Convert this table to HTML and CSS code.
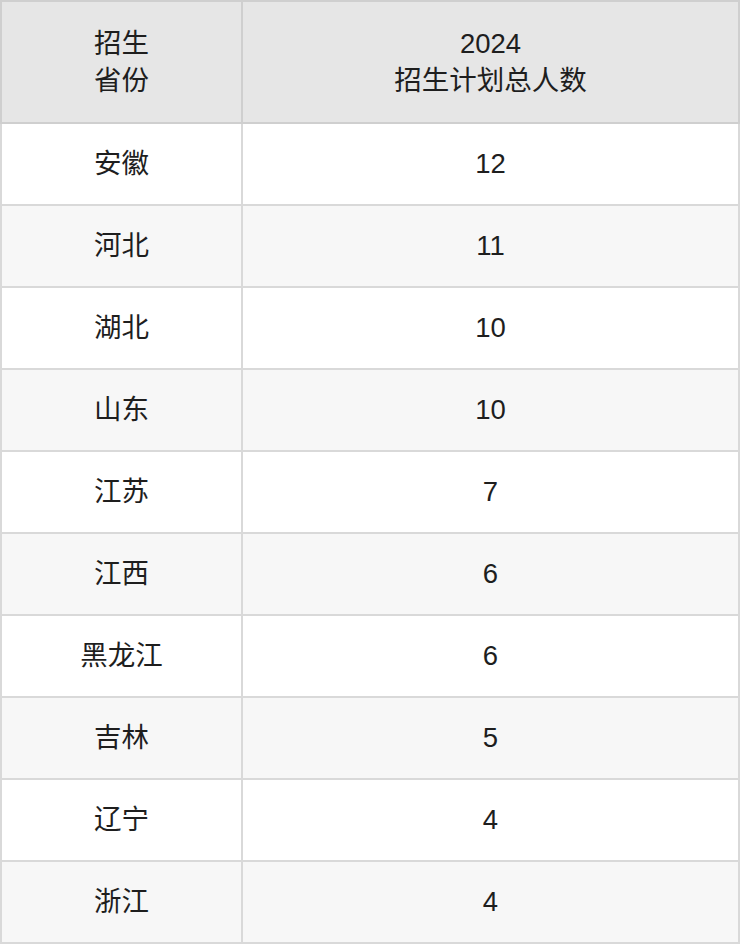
FILE: index.html
```html
<!DOCTYPE html>
<html lang="zh">
<head>
<meta charset="utf-8">
<link rel="stylesheet" href="styles.css">
</head>
<body>
<table class="plan">
  <thead>
    <tr><th class="c1">招生<br>省份</th><th class="c2">2024<br>招生计划总人数</th></tr>
  </thead>
  <tbody>
    <tr><td>安徽</td><td>12</td></tr>
    <tr><td>河北</td><td>11</td></tr>
    <tr><td>湖北</td><td>10</td></tr>
    <tr><td>山东</td><td>10</td></tr>
    <tr><td>江苏</td><td>7</td></tr>
    <tr><td>江西</td><td>6</td></tr>
    <tr><td>黑龙江</td><td>6</td></tr>
    <tr><td>吉林</td><td>5</td></tr>
    <tr><td>辽宁</td><td>4</td></tr>
    <tr><td>浙江</td><td>4</td></tr>
  </tbody>
</table>
</body>
</html>
```
FILE: styles.css
```css
html, body { margin: 0; padding: 0; background: #fff; }
.plan {
  border-collapse: collapse;
  width: 740px;
  table-layout: fixed;
  font-family: "Liberation Sans", "Noto Sans CJK SC", sans-serif;
  font-size: 27.5px;
  color: #1e1e1e;
}
.plan th, .plan td {
  border: 2px solid #d9d9d9;
  text-align: center;
  vertical-align: middle;
  padding: 0;
  font-weight: normal;
}
.plan th {
  background: #e6e6e6;
  height: 120px;
  line-height: 37px;
  border-color: #cfcfcf;
}
.plan th.c1 { width: 239px; }
.plan td { height: 80px; line-height: 30px; }
.plan tbody tr:nth-child(even) td { background: #f7f7f7; }
```
